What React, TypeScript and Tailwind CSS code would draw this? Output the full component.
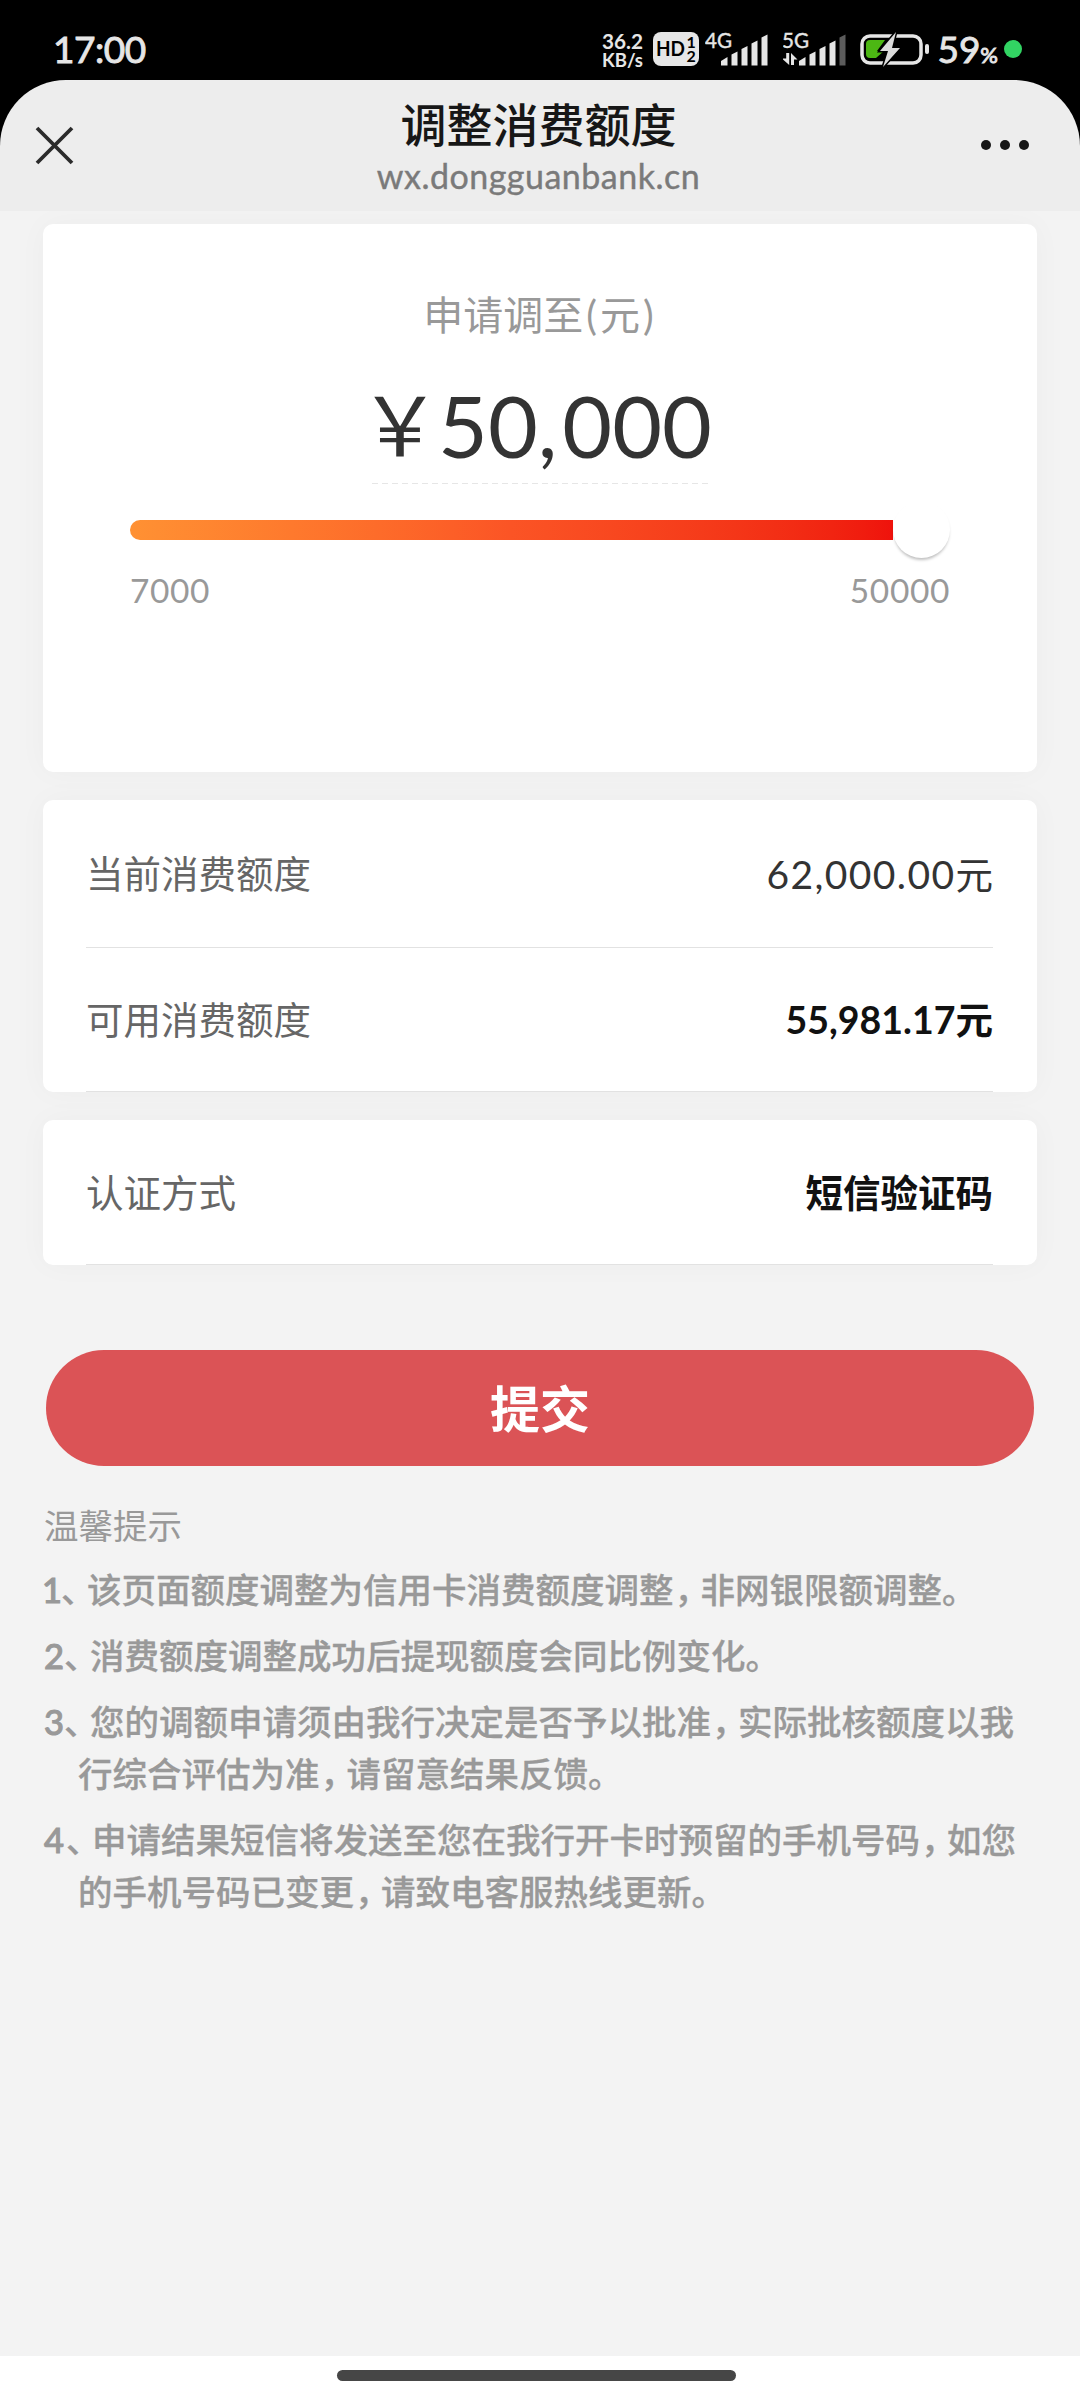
import React from 'react';

const notices = [
  { no: '1', noWidth: 'w-[20px] -ml-[2px] mr-[-1px]', lines: ['该页面额度调整为信用卡消费额度调整，非网银限额调整。'] },
  { no: '2', noWidth: 'w-[20px]', lines: ['消费额度调整成功后提现额度会同比例变化。'] },
  { no: '3', noWidth: 'w-[20px]', lines: ['您的调额申请须由我行决定是否予以批准，实际批核额度以我', '行综合评估为准，请留意结果反馈。'] },
  { no: '4', noWidth: 'w-[22px]', lines: ['申请结果短信将发送至您在我行开卡时预留的手机号码，如您', '的手机号码已变更，请致电客服热线更新。'] },
];

// Full width commas are set tighter than the other characters
function NoticeText({ text }: { text: string }) {
  return (
    <>
      {text.split('，').map((part, i) => (
        <React.Fragment key={i}>
          {i > 0 && <span className="inline-block w-[27px] pl-[1px] [font-feature-settings:'halt']">，</span>}
          {part}
        </React.Fragment>
      ))}
    </>
  );
}

function Signal({ label, weak }: { label: string; weak?: boolean }) {
  return (
    <svg width="66" height="44" viewBox="0 -8 66 44" className="block -mt-[8px]">
      <text x={weak ? -1 : 0} y="15.500" fontSize="20.500" stroke="#e6e6e6" strokeWidth="0.400" textLength="27" lengthAdjust="spacingAndGlyphs" fill="#e6e6e6">{label}</text>
      {weak && (
        <g fill="#e6e6e6">
          <path d="M3.200 21h3v12L-1 26.500h4.200z" />
          <path d="M8 33V21l6.500 6.500H11V33z" />
        </g>
      )}
      <g fill="#e6e6e6">
        <path d="M16 29l6.500-4v8.500H16z" />
        <path d="M26.500 22.500l6-3v14h-6z" />
        <path d="M36.500 17l6-3v19.500h-6z" />
        <path d="M46.500 11.500l6-3v25h-6z" />
        <path d="M56.500 5.500l6-3v31h-6z" fill={weak ? '#5c5c5c' : '#e6e6e6'} />
      </g>
    </svg>
  );
}

function StatusBar() {
  return (
    <div className="h-[80px] pl-[53px] pr-[58px] flex items-start justify-between text-[#e6e6e6]">
      <div className="mt-[29px] text-[37px] leading-[40px] tracking-[-0.5px] [-webkit-text-stroke:0.9px]">17:00</div>

      <div className="flex items-start mt-[32px]">
        <svg width="42" height="52" viewBox="0 -8 42 52" className="-mt-[8px]" fill="#e6e6e6" fontWeight="700">
          <text x="0" y="16.500" fontSize="20.500" textLength="41" lengthAdjust="spacingAndGlyphs">36.2</text>
          <text x="0" y="35" fontSize="18.500" textLength="41" lengthAdjust="spacingAndGlyphs">KB/s</text>
        </svg>
        <div className="ml-[9px] w-[46px] h-[34px] rounded-[8px] bg-[#e6e6e6]">
          <svg width="46" height="34" viewBox="0 0 46 34" fill="#000" fontWeight="700">
            <text x="3" y="24" fontSize="20.500" textLength="29" lengthAdjust="spacingAndGlyphs">HD</text>
            <text x="33.500" y="15.500" fontSize="16">1</text>
            <text x="33.500" y="30" fontSize="16">2</text>
          </svg>
        </div>
        <div className="ml-[6px]">
          <Signal label="4G" />
        </div>
        <div className="ml-[12px]">
          <Signal label="5G" weak />
        </div>

        <svg width="72" height="36" viewBox="0 0 72 36" className="ml-[10px]" fill="none">
          <rect x="3" y="4" width="59" height="27" rx="8" stroke="#e6e6e6" strokeWidth="3.500" />
          <path d="M11 8h15l-8 11h7l-8 7h-6a4 4 0 0 1-4-4V12a4 4 0 0 1 4-4z" fill="#4cb713" />
          <path d="M37 0L21 19h8l-5 16 17-19h-8z" fill="#dcdcdc" stroke="#000" strokeWidth="3" paintOrder="stroke" />
          <rect x="66" y="12" width="4" height="10" rx="2" fill="#e6e6e6" />
        </svg>
        <div className="ml-[6px] -mt-[3px] text-[37px] leading-[40px] [-webkit-text-stroke:0.9px]">
          59<span className="text-[22px]">%</span>
        </div>
        <div className="ml-[6px] mt-[8px] w-[18px] h-[18px] rounded-full bg-[#32d463]"></div>
      </div>
    </div>
  );
}

function Header() {
  return (
    <div className="relative z-10 h-[131px] bg-[#ededed] rounded-t-[66px] flex items-start justify-between pl-[35px] pr-[51px]">
      <svg width="39" height="39" viewBox="0 0 39 39" className="mt-[46px]" stroke="#2b2b2b" strokeWidth="3.800" strokeLinecap="butt">
        <path d="M2 2l35 35M37 2L2 37" />
      </svg>
      <div className="ml-[22px] pt-[19px] text-center whitespace-nowrap">
        <div className="text-[46px] leading-[52px] font-medium text-[#171717]">调整消费额度</div>
        <div className="mt-px text-[34px] leading-[48px] tracking-[0.5px] text-[#7a7a7a] [-webkit-text-stroke:0.4px]">wx.dongguanbank.cn</div>
      </div>
      <div className="flex gap-[9px] mt-[60px]">
        <div className="w-[10px] h-[10px] rounded-full bg-[#171717]"></div>
        <div className="w-[10px] h-[10px] rounded-full bg-[#171717]"></div>
        <div className="w-[10px] h-[10px] rounded-full bg-[#171717]"></div>
      </div>
    </div>
  );
}

export default function App() {
  return (
    <div className="w-[1080px] h-[2400px] bg-black flex flex-col overflow-hidden font-['Lato','Noto_Sans_CJK_SC',sans-serif]">
      <StatusBar />
      <Header />

      <div className="flex-1 bg-[#f3f3f3] px-[43px] pt-[13px] whitespace-nowrap">
        {/* Amount */}
        <div className="h-[548px] rounded-[10px] bg-white shadow-[0_0_30px_rgba(0,0,0,0.03)] px-[87px] pt-[65px]">
          <div className="text-center text-[40px] leading-[52px] text-[#999]">
            申请调至<span className="px-[3px]">(</span>元<span className="px-[3px]">)</span>
          </div>
          <div className="mx-auto w-[336px] h-[142px] flex items-start text-[#333]">
            <span className="-ml-[13px] w-[79px] mt-[30px] text-[82px] leading-[100px] font-['Noto_Sans_CJK_SC']">￥</span>
            <span className="mt-[34px] text-[86px] leading-[100px]">
              50<span className="tracking-[5px]">,</span>000
            </span>
          </div>
          <div className="mx-auto w-[336px] h-px bg-[repeating-linear-gradient(90deg,#e6e6e6_0_6px,transparent_6px_10px)]"></div>

          <div className="h-[57px] mt-[17px] flex items-center">
            <div className="flex-1 h-[20px] rounded-l-full bg-linear-to-r from-[#ff9133] via-[#fb5425] to-[#ef120c]"></div>
            <div className="w-[57px] h-[57px] rounded-full bg-white shadow-[0_3px_3px_-1px_rgba(0,0,0,0.25)]"></div>
          </div>
          <div className="mt-[12px] flex justify-between text-[33.500px] leading-[40px] tracking-[0.6px] text-[#999]">
            <span>7000</span>
            <span>50000</span>
          </div>
        </div>

        {/* Current limits */}
        <div className="mt-[28px] h-[292px] rounded-[10px] bg-white shadow-[0_0_30px_rgba(0,0,0,0.03)] pl-[43px] pr-[44px]">
          <div className="h-[148px] pt-[2px] border-b border-[#e2e2e2] flex items-center justify-between text-[37.500px]">
            <span className="text-[#666]">当前消费额度</span>
            <span className="text-[#333]"><span className="text-[39px] tracking-[1.4px]">62,000.00</span>元</span>
          </div>
          <div className="h-[144px] pt-[2px] border-b border-[#e2e2e2] flex items-center justify-between text-[37.500px]">
            <span className="text-[#666]">可用消费额度</span>
            <span className="font-bold text-[#111]">55,981.17元</span>
          </div>
        </div>

        {/* Verification */}
        <div className="mt-[28px] h-[145px] rounded-[10px] bg-white shadow-[0_0_30px_rgba(0,0,0,0.03)] pl-[43px] pr-[44px]">
          <div className="h-[145px] pt-[2px] border-b border-[#e2e2e2] flex items-center justify-between text-[37.500px]">
            <span className="text-[#666]">认证方式</span>
            <span className="font-bold text-[#111]">短信验证码</span>
          </div>
        </div>

        <button className="block mt-[85px] mx-[3px] w-[988px] h-[116px] rounded-full bg-[#db5356] text-white text-[50px] leading-[118px] font-bold">
          提交
        </button>

        <div className="mt-[34px] pl-[1px] text-[34.500px] leading-[52px] text-[#999]">
          <div>温馨提示</div>
          <div className="mt-[12px] space-y-[14px] font-medium [-webkit-text-stroke:0.3px]">
            {notices.map((item) => (
              <div key={item.no}>
                {item.lines.map((line, i) => (
                  <div key={line} className={i > 0 ? 'pl-[34px]' : 'flex'}>
                    {i === 0 && (
                      <>
                        <span className={`${item.noWidth} [-webkit-text-stroke:1px]`}>{item.no}</span>
                        <span className="w-[26px] [font-feature-settings:'halt']">、</span>
                      </>
                    )}
                    <span><NoticeText text={line} /></span>
                  </div>
                ))}
              </div>
            ))}
          </div>
        </div>
      </div>

      {/* Gesture bar */}
      <div className="h-[44px] bg-white pt-[14px]">
        <div className="ml-[337px] w-[399px] h-[11px] rounded-full bg-[#464646]"></div>
      </div>
    </div>
  );
}
